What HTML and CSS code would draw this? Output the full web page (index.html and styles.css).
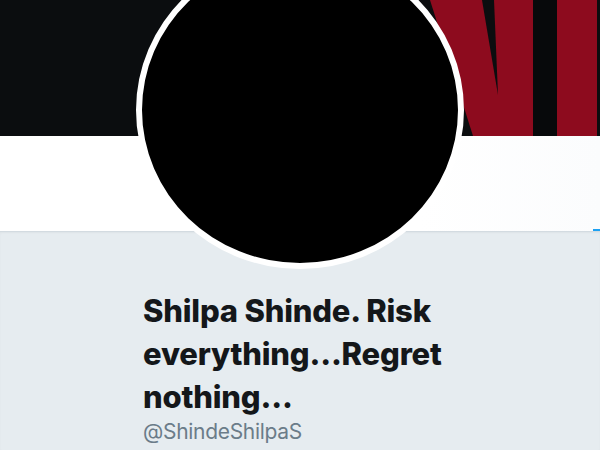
FILE: index.html
```html
<!DOCTYPE html>
<html>
<head>
<meta charset="utf-8">
<link rel="stylesheet" href="styles.css">
</head>
<body>
<div class="page">
  <div class="banner">
    <svg width="600" height="136" viewBox="0 0 600 136" xmlns="http://www.w3.org/2000/svg">
      <rect width="600" height="136" fill="#0b0d0f"/>
      <polygon points="430,0 533,0 533,136 473,136" fill="#8d0b1e"/>
      <polygon points="482,0 494,0 498,95" fill="#0b0d0f"/>
      <rect x="557" y="0" width="40" height="136" fill="#8d0b1e"/>
      <rect x="533" y="0" width="24" height="136" fill="#07090b"/>
    </svg>
  </div>
  <div class="strip"><div class="tab-mark"></div></div>
  <div class="info">
    <h1 class="name">Shilpa Shinde. Risk everything...Regret nothing...</h1>
    <div class="handle">@ShindeShilpaS</div>
  </div>
  <div class="avatar"></div>
</div>
</body>
</html>
```
FILE: styles.css
```css
html, body {
  margin: 0;
  padding: 0;
  width: 600px;
  height: 450px;
  overflow: hidden;
  background: #e6ecf0;
}
.page {
  position: relative;
  width: 600px;
  height: 450px;
  display: flex;
  flex-direction: column;
}
.banner {
  height: 136px;
  flex: none;
}
.banner svg {
  display: block;
}
.strip {
  height: 95px;
  flex: none;
  background: linear-gradient(90deg, #ffffff 70%, #fbfcfd 100%);
  display: flex;
  justify-content: flex-end;
  align-items: flex-end;
}
.tab-mark {
  width: 7px;
  height: 2px;
  background: #1da1f2;
}
.info {
  flex: 1;
  border-top: 1px solid #d3dbe1;
  box-shadow: inset 0 1px 2px rgba(0,0,0,0.04);
  padding: 57px 0 0 143px;
  font-family: Inter, "Noto Sans", sans-serif;
}
.name {
  margin: 0;
  width: 320px;
  font-size: 31px;
  line-height: 43px;
  font-weight: 800;
  letter-spacing: -0.2px;
  color: #14171a;
}
.handle {
  margin-top: 1px;
  font-size: 21px;
  line-height: 26px;
  letter-spacing: -0.3px;
  color: #6b7c89;
}
.avatar {
  position: absolute;
  left: 136px;
  top: -49px;
  width: 316px;
  height: 306px;
  border: 6px solid #ffffff;
  border-radius: 50%;
  background: #000000;
}
```
